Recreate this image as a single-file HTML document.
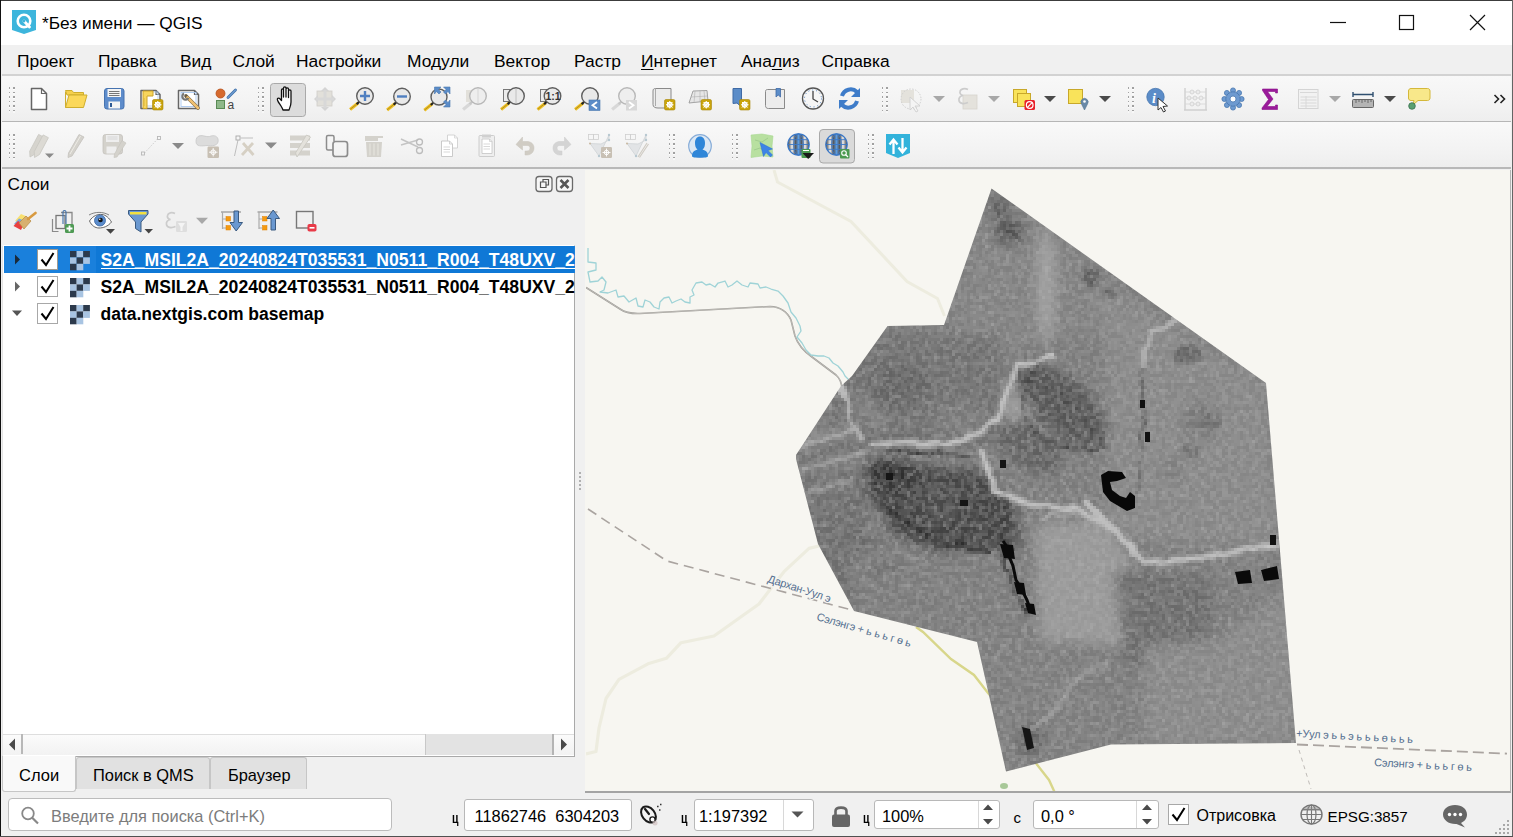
<!DOCTYPE html>
<html><head><meta charset="utf-8">
<style>
*{box-sizing:border-box}
html,body{margin:0;padding:0}
body{width:1513px;height:837px;overflow:hidden;position:relative;background:#4a4a4a;font-family:"Liberation Sans",sans-serif;color:#000}
.a{position:absolute}
.t{position:absolute;white-space:nowrap;line-height:1}
svg{position:absolute;left:0;top:0;overflow:visible}
</style></head><body>
<div class="a" style="left:0px;top:0px;width:1513px;height:1px;background:#3c3c3c"></div>
<div class="a" style="left:0px;top:0px;width:1px;height:837px;background:#111"></div>
<div class="a" style="left:1512px;top:0px;width:1px;height:837px;background:#646464"></div>
<div class="a" style="left:0px;top:836px;width:1513px;height:1px;background:#505050"></div>
<div class="a" style="left:1px;top:1px;width:1511px;height:835px;background:#f0f0f0"></div>
<div class="a" style="left:1px;top:1px;width:1511px;height:44px;background:#fff"></div>
<div class="t" style="left:42px;top:15.36px;font-size:17.3px;">*Без имени — QGIS</div>
<div class="a" style="left:2px;top:45px;width:1509px;height:29px;background:#f0f0f0"></div>
<div class="a" style="left:2px;top:74px;width:1509px;height:2px;background:#d2d2d2"></div>
<div class="t" style="left:17px;top:53.27px;font-size:17.4px;text-underline-offset:2px">Проект</div>
<div class="t" style="left:98px;top:53.27px;font-size:17.4px;text-underline-offset:2px">Правка</div>
<div class="t" style="left:180px;top:53.27px;font-size:17.4px;text-underline-offset:2px">Вид</div>
<div class="t" style="left:232.5px;top:53.27px;font-size:17.4px;text-underline-offset:2px">Слой</div>
<div class="t" style="left:296px;top:53.27px;font-size:17.4px;text-underline-offset:2px">Настройки</div>
<div class="t" style="left:407px;top:53.27px;font-size:17.4px;text-underline-offset:2px">Модули</div>
<div class="t" style="left:494px;top:53.27px;font-size:17.4px;text-underline-offset:2px">Вектор</div>
<div class="t" style="left:574px;top:53.27px;font-size:17.4px;text-underline-offset:2px">Растр</div>
<div class="t" style="left:641px;top:53.27px;font-size:17.4px;text-underline-offset:2px"><u>И</u>нтернет</div>
<div class="t" style="left:741px;top:53.27px;font-size:17.4px;text-underline-offset:2px">Ана<u>л</u>из</div>
<div class="t" style="left:821.5px;top:53.27px;font-size:17.4px;text-underline-offset:2px">Справка</div>
<div class="a" style="left:2px;top:76px;width:1509px;height:45px;background:linear-gradient(#f8f8f8,#f3f3f3 60%,#eeeeee)"></div>
<div class="a" style="left:2px;top:121px;width:1509px;height:1px;background:#b6b6b6"></div>
<div class="a" style="left:2px;top:122px;width:1509px;height:45px;background:linear-gradient(#f9f9f9,#f3f3f3 60%,#eeeeee)"></div>
<div class="a" style="left:2px;top:167px;width:1509px;height:2px;background:#b8b8b8"></div>
<div class="t" style="left:7.5px;top:176.44px;font-size:17.2px;">Слои</div>
<div class="a" style="left:2px;top:245px;width:573px;height:512px;background:#fff;border-left:1px solid #e4e4e4;border-top:1px solid #fff;border-right:1px solid #a9a9a9;border-bottom:1px solid #a9a9a9"></div>
<div class="a" style="left:4px;top:246px;width:571px;height:27px;background:#1a80dc"></div>
<div class="a" style="left:96px;top:246px;width:478px;height:27px;background:#0f78d6"></div>
<div class="t" style="left:100.5px;top:252.10px;font-size:17.6px;color:#fff;text-decoration:underline;text-underline-offset:2px;font-weight:bold;width:474px;overflow:hidden">S2A_MSIL2A_20240824T035531_N0511_R004_T48UXV_2024</div>
<div class="t" style="left:100.5px;top:279.10px;font-size:17.6px;font-weight:bold;width:474px;overflow:hidden">S2A_MSIL2A_20240824T035531_N0511_R004_T48UXV_2024</div>
<div class="t" style="left:100.5px;top:306.19px;font-size:17.5px;font-weight:bold;">data.nextgis.com basemap</div>
<div class="a" style="left:3px;top:734px;width:571px;height:21px;background:linear-gradient(#fbfbfb,#f2f2f2);border-top:1px solid #dedede"></div>
<div class="a" style="left:21px;top:734px;width:1.5px;height:20px;background:#b8b8b8"></div>
<div class="a" style="left:425px;top:734px;width:129px;height:21px;background:#e3e3e3;border-left:1px solid #c8c8c8;border-right:2px solid #b4b4b4"></div>
<div class="a" style="left:76px;top:757px;width:134px;height:32px;background:#e1e1e1;border:1px solid #c6c6c6;border-bottom:none;border-radius:3px 3px 0 0"></div>
<div class="a" style="left:210px;top:757px;width:97px;height:32px;background:#e1e1e1;border:1px solid #c6c6c6;border-bottom:none;border-radius:3px 3px 0 0"></div>
<div class="a" style="left:2px;top:756px;width:74px;height:36px;background:#f9f9f9;border:1px solid #c6c6c6;border-top:none;border-radius:0 0 3px 3px"></div>
<div class="t" style="left:19px;top:766.53px;font-size:16.5px;">Слои</div>
<div class="t" style="left:93px;top:766.62px;font-size:16.4px;">Поиск в QMS</div>
<div class="t" style="left:228px;top:766.62px;font-size:16.4px;">Браузер</div>
<div class="a" style="left:585px;top:170px;width:926px;height:623px;background:#f7f6f1;border-right:1px solid #b4b4b4;border-bottom:2px solid #a4a4a4"></div>
<svg width="1513" height="837"><defs><clipPath id="mapclip"><rect x="586" y="170" width="924" height="621"/></clipPath><clipPath id="satclip"><polygon points="991.5,188.5 1266,383 1296,743 1111,744.5 1006,771.5 977,642 854,611 818,544 796,459 796,455 841,386 852,376 887.5,326 944,325"/></clipPath><filter id="blur6" x="-50%" y="-50%" width="200%" height="200%"><feGaussianBlur stdDeviation="6"/></filter><filter id="blur3" x="-50%" y="-50%" width="200%" height="200%"><feGaussianBlur stdDeviation="3"/></filter><filter id="blur12" x="-50%" y="-50%" width="200%" height="200%"><feGaussianBlur stdDeviation="12"/></filter><filter id="noise" x="0" y="0" width="100%" height="100%"><feTurbulence type="fractalNoise" baseFrequency="0.18" numOctaves="2" seed="7"/><feColorMatrix type="matrix" values="0 0 0 0 0.45  0 0 0 0 0.45  0 0 0 0 0.45  2.2 0 0 0 -0.8"/></filter><filter id="noise2" x="0" y="0" width="100%" height="100%"><feTurbulence type="fractalNoise" baseFrequency="0.03" numOctaves="3" seed="3"/><feColorMatrix type="matrix" values="0.33 0.33 0.33 0 0  0.33 0.33 0.33 0 0  0.33 0.33 0.33 0 0  0 0 0 0 1"/></filter><filter id="pix" filterUnits="userSpaceOnUse" x="790" y="185" width="510" height="590"><feFlood x="791" y="186" width="1" height="1" flood-color="#000"/><feComposite x="790" y="185" width="3" height="3"/><feTile result="a"/><feComposite in="SourceGraphic" in2="a" operator="in"/><feMorphology operator="dilate" radius="1"/></filter><filter id="blur1" x="-50%" y="-50%" width="200%" height="200%"><feGaussianBlur stdDeviation="1.2"/></filter><filter id="disp" x="-10%" y="-10%" width="120%" height="120%"><feTurbulence type="fractalNoise" baseFrequency="0.07" numOctaves="2" seed="11" result="t"/><feDisplacementMap in="SourceGraphic" in2="t" scale="9" xChannelSelector="R" yChannelSelector="G" result="d"/><feGaussianBlur in="d" stdDeviation="1.3"/></filter></defs><g clip-path="url(#mapclip)"><path d="M774 170 L777.5 182 L851 221.5 L907 281.5 L937.5 298.5 L944.5 316" fill="none" stroke="#edecdf" stroke-width="3"/><path d="M586 754 L596 751.5 L599 728 L606 698.5 L619 679.3 L648 663.8 L666.4 658.3 L681 642.7 L714 636 L759 604 L771.4 587.8 L784 571.7 L809 548.4 L820 545.7" fill="none" stroke="#edecdf" stroke-width="3.2" stroke-linejoin="round"/><path d="M586 287.5 L620 309 Q627 314 640 313.5 L770 306.5 Q785 307 791 320 L795 336 Q799 348 812 357 L836 375 Q842 380 842 390" fill="none" stroke="#9a9894" stroke-width="1.6"/><path d="M586 287.5 L620 309 Q627 314 640 313.5 L770 306.5 Q785 307 791 320 L795 336 Q799 348 812 357 L836 375 Q842 380 842 390" fill="none" stroke="#dcdad4" stroke-width="0.5"/><polyline points="588,248 588,262 596,263 596,270 588,272 590,282 598,281 602,277 606,282 604,290 600,292 608,293 616,290 618,297 624,296 629,302 636,298 638,306 643,307 645,300 650,302 654,307 659,309 660,302 664,298 669,297 672,303 676,301 681,299 685,302 690,303 690,297 694,295 692,290 696,283 702,282 706,285 710,284 715,287 718,283 725,281 728,287 732,285 737,281 742,285 748,287 750,283 758,284 760,288 766,287 771,289 778,291 783,296 788,303 791,312 796,318 800,326 801,331 797,337 802,343 806,350 811,355 818,356 824,356 829,358 833,363 838,366 843,372 845,376 849,380 851,386" fill="none" stroke="#9fd3d7" stroke-width="1.3" stroke-linejoin="round"/><path d="M588 509 L667 561 L850 609.5" fill="none" stroke="#aaa4a0" stroke-width="1.6" stroke-dasharray="10 6"/><path d="M1297 744.5 L1507 753.6" fill="none" stroke="#aaa4a0" stroke-width="1.8" stroke-dasharray="11 5"/><path d="M1299 750 L1311 789" fill="none" stroke="#c0bcb8" stroke-width="1" stroke-dasharray="4 4"/><path d="M916 627 L923 632 L951 659 L974 675 L988 693 L1003 710" fill="none" stroke="#d8d68a" stroke-width="2.4"/><path d="M1035 762 L1049 780 L1055 793" fill="none" stroke="#d8d68a" stroke-width="2.4"/><ellipse cx="1004" cy="786" rx="4" ry="3" fill="#a8c898"/><text transform="translate(767,582) rotate(18)" font-family="Liberation Sans" font-size="11" letter-spacing="-0.2" fill="#557090" stroke="#f7f6f1" stroke-width="2.5" paint-order="stroke">Дархан-Уул э</text><text transform="translate(816,620) rotate(16)" font-family="Liberation Sans" font-size="11" letter-spacing="-0.2" fill="#557090" stroke="#f7f6f1" stroke-width="2.5" paint-order="stroke">Сэлэнгэ + ь ь  ь г ө ь</text><text transform="translate(1296,737) rotate(3)" font-family="Liberation Sans" font-size="11" letter-spacing="-0.2" fill="#557090" stroke="#f7f6f1" stroke-width="2.5" paint-order="stroke">+Уул э ь ь  э ь ь   ь ө ь ь ь</text><text transform="translate(1374,766) rotate(3)" font-family="Liberation Sans" font-size="11" letter-spacing="-0.2" fill="#557090" stroke="#f7f6f1" stroke-width="2.5" paint-order="stroke">Сэлэнгэ + ь ь  ь г ө ь</text><g clip-path="url(#satclip)"><g filter="url(#pix)"><rect x="790" y="185" width="510" height="590" fill="#7a7a7a"/><g filter="url(#blur6)"><path d="M945 320 L991 190 L1110 270 L1105 330 L1000 350 Z" fill="#808080"/><ellipse cx="1000" cy="208" rx="10" ry="11" fill="#4a4a4a"/><ellipse cx="1010" cy="232" rx="15" ry="13" fill="#4e4e4e"/><ellipse cx="1046" cy="285" rx="8" ry="58" fill="#a2a2a2"/><ellipse cx="1025" cy="395" rx="16" ry="38" transform="rotate(25 1025 395)" fill="#9a9a9a"/><ellipse cx="1090" cy="280" rx="10" ry="8" fill="#666"/><ellipse cx="1150" cy="325" rx="16" ry="10" fill="#686868"/><path d="M1100 280 L1266 383 L1280 545 L1106 540 L1106 380 Z" fill="#868686"/><ellipse cx="1200" cy="420" rx="18" ry="20" fill="#777"/><ellipse cx="1170" cy="470" rx="14" ry="10" fill="#7a7a7a"/><path d="M852 330 L1000 335 L1002 447 L870 452 L820 440 Z" fill="#6e6e6e"/><ellipse cx="900" cy="385" rx="30" ry="24" fill="#636363"/><path d="M858 400 L885 427" stroke="#8a8a8a" stroke-width="8"/><ellipse cx="960" cy="420" rx="30" ry="16" fill="#787878"/><path d="M796 440 L870 430 L868 560 L852 612 L820 580 Z" fill="#6c6c6c"/><path d="M800 446 L830 436 L862 428" stroke="#a2a2a2" stroke-width="5" fill="none"/><path d="M804 468 L835 462 L866 456" stroke="#949494" stroke-width="5" fill="none"/><path d="M808 492 L850 484" stroke="#8a8a8a" stroke-width="4"/><path d="M850 545 C860 538 872 550 887 545" stroke="#444" stroke-width="3" fill="none"/><ellipse cx="1062" cy="405" rx="58" ry="27" transform="rotate(42 1062 405)" fill="#555555"/><ellipse cx="1030" cy="447" rx="36" ry="21" transform="rotate(35 1030 447)" fill="#5e5e5e"/><path d="M868 462 L980 470 L1015 505 L1022 548 L940 553 L895 535 L866 490 Z" fill="#424242"/><path d="M868 460 L912 460 L910 488 L870 488 Z" fill="#2e2e2e"/><ellipse cx="945" cy="500" rx="30" ry="16" fill="#4a4a4a"/><path d="M1034 525 L1100 520 L1130 560 L1125 646 L1040 640 Z" fill="#989898"/><path d="M852 553 L1000 555 L1005 640 L977 642 L853 609 Z" fill="#7a7a7a"/><path d="M872 573 L900 565" stroke="#505050" stroke-width="4"/><path d="M1114 570 L1211 575 L1215 662 L1125 670 Z" fill="#6a6a6a"/><path d="M1144 646 L1215 640 L1290 590 L1296 742 L1144 744 Z" fill="#878787"/><path d="M977 640 L1040 640 L1110 700 L1107 745 L1004 772 Z" fill="#7c7c7c"/><ellipse cx="1030" cy="740" rx="14" ry="16" fill="#5e5e5e"/></g><g filter="url(#disp)"><path d="M1055 356 L1019 365 L1007 388 L998 420 L969 436 L947 445 L908 442 L870 445" fill="none" stroke="#a8a8a8" stroke-width="6" stroke-linejoin="round"/><path d="M1055 356 L1019 365 L1007 388 L998 420 L969 436 L947 445 L908 442 L870 445" fill="none" stroke="#c8c8c8" stroke-width="2.5" stroke-linejoin="round"/><path d="M981 450 L995 490 L1031 505 L1074 508 L1103 523 L1131 544 L1142 562 L1192 559 L1242 551 L1278 544" fill="none" stroke="#a6a6a6" stroke-width="7" stroke-linejoin="round"/><path d="M981 450 L995 490 L1031 505 L1074 508 L1103 523 L1131 544 L1142 562 L1192 559 L1242 551 L1278 544" fill="none" stroke="#cccccc" stroke-width="2.5" stroke-linejoin="round"/><path d="M886 451 L969 456" stroke="#2e2e2e" stroke-width="2.5"/><path d="M1038 361 C1025 375 1020 400 1025 420 C1035 440 1065 452 1100 450" fill="none" stroke="#3a3a3a" stroke-width="2"/><path d="M1021 382 C1045 378 1085 410 1104 448" fill="none" stroke="#454545" stroke-width="2"/><path d="M880 500 C900 520 930 545 990 550" fill="none" stroke="#2a2a2a" stroke-width="4"/><path d="M1005 500 L1000 540 L1010 580 L1030 615" fill="none" stroke="#3a3a3a" stroke-width="4"/><path d="M840 383 L851 413" stroke="#bdbdbd" stroke-width="6"/><path d="M1040 520 C1060 510 1090 515 1110 530" fill="none" stroke="#b0b0b0" stroke-width="3"/><path d="M1108 661 C1090 668 1075 680 1065 695 C1055 710 1045 720 1030 728" fill="none" stroke="#999" stroke-width="4"/><path d="M1141 367 L1152 332 L1177 321" fill="none" stroke="#b4b4b4" stroke-width="5"/><path d="M1142 367 L1143 420 L1140 460 L1136 500" fill="none" stroke="#505050" stroke-width="1.5"/><ellipse cx="1188" cy="355" rx="14" ry="10" fill="#666"/><ellipse cx="1210" cy="421" rx="11" ry="9" fill="#6e6e6e"/><ellipse cx="1190" cy="450" rx="9" ry="7" fill="#707070"/><ellipse cx="1091" cy="276" rx="7" ry="9" fill="#5a5a5a"/><ellipse cx="1108" cy="294" rx="7" ry="5" fill="#606060"/><path d="M1085 500 C1100 520 1120 530 1134 555" fill="none" stroke="#c0c0c0" stroke-width="7"/><path d="M800 450 L815 440 L835 436 L858 428" fill="none" stroke="#a8a8a8" stroke-width="4"/><path d="M802 468 L825 462 L848 458 L866 452" fill="none" stroke="#9c9c9c" stroke-width="3.5"/><path d="M808 490 L830 487 L852 480" fill="none" stroke="#969696" stroke-width="3"/><path d="M845 395 L852 420 L860 440" fill="none" stroke="#b0b0b0" stroke-width="4"/></g><rect x="790" y="185" width="510" height="590" filter="url(#noise)" opacity="0.55"/></g><path d="M1101 475 L1108 471 L1122 472 L1126 478 L1117 481 L1110 482 L1112 490 L1120 496 L1126 498 L1130 492 L1135 496 L1135 508 L1127 511 L1110 501 L1103 492 Z" fill="#080808"/><path d="M1003 541 L1008 548 L1009 556 L1013 566 L1016 580 L1021 588 L1027 600 L1031 612" fill="none" stroke="#0a0a0a" stroke-width="3"/><path d="M1000 544 L1013 545 L1015 559 L1004 558 Z M1014 582 L1024 583 L1026 595 L1017 594 Z M1025 603 L1034 604 L1036 615 L1028 613 Z" fill="#0a0a0a"/><path d="M1235 572 L1250 570 L1252 583 L1238 584 Z" fill="#0a0a0a"/><path d="M1261 570 L1277 566 L1279 579 L1264 581 Z" fill="#0a0a0a"/><path d="M1022 727 L1030 729 L1034 748 L1027 750 Z" fill="#151515"/><path d="M1140 400 L1145 400 L1145 408 L1140 408 Z M1145 432 L1150 432 L1150 442 L1145 442 Z M1270 535 L1276 535 L1276 545 L1270 545 Z" fill="#111"/><path d="M886 473 L893 473 L893 480 L886 480 Z M1000 460 L1006 460 L1006 468 L1000 468 Z M960 500 L968 500 L968 506 L960 506 Z" fill="#151515"/></g></g></svg>
<div class="a" style="left:8px;top:798px;width:384px;height:33px;background:#fff;border:1px solid #bcbcbc;border-radius:4px"></div>
<div class="t" style="left:51px;top:808.12px;font-size:16.4px;color:#7c7c7c">Введите для поиска (Ctrl+K)</div>
<div class="t" style="left:452px;top:810.30px;font-size:15px;font-weight:bold;transform:scaleX(0.7);transform-origin:left">ц</div>
<div class="a" style="left:464px;top:799px;width:168px;height:32px;background:#fff;border:1px solid #b8b8b8;border-radius:3px"></div>
<div class="t" style="left:474.5px;top:808.12px;font-size:16.4px;">11862746&nbsp; 6304203</div>
<div class="t" style="left:681px;top:810.30px;font-size:15px;font-weight:bold;transform:scaleX(0.7);transform-origin:left">ц</div>
<div class="a" style="left:694px;top:799px;width:120px;height:32px;background:#fff;border:1px solid #b8b8b8;border-radius:3px"></div>
<div class="a" style="left:783px;top:800px;width:1px;height:30px;background:#d8d8d8"></div>
<div class="t" style="left:699px;top:808.12px;font-size:16.4px;">1:197392</div>
<div class="t" style="left:863px;top:810.30px;font-size:15px;font-weight:bold;transform:scaleX(0.7);transform-origin:left">ц</div>
<div class="a" style="left:874px;top:800px;width:126px;height:29px;background:#fff;border:1px solid #b8b8b8;border-radius:3px"></div>
<div class="a" style="left:978px;top:801px;width:1px;height:27px;background:#d8d8d8"></div>
<div class="t" style="left:882px;top:808.12px;font-size:16.4px;">100%</div>
<div class="t" style="left:1013.5px;top:810.30px;font-size:15px;">c</div>
<div class="a" style="left:1033px;top:800px;width:126px;height:29px;background:#fff;border:1px solid #b8b8b8;border-radius:3px"></div>
<div class="a" style="left:1136px;top:801px;width:1px;height:27px;background:#d8d8d8"></div>
<div class="t" style="left:1041px;top:808.12px;font-size:16.4px;">0,0 °</div>
<div class="t" style="left:1196.5px;top:807.96px;font-size:16px;">Отрисовка</div>
<div class="t" style="left:1327.5px;top:808.63px;font-size:15.2px;">EPSG:3857</div>
<svg width="1513" height="837"><path d="M12 10 H36 V30 L24 34 L12 30 Z" fill="#3db5dc"/><circle cx="24" cy="21" r="6.3" fill="none" stroke="#fff" stroke-width="2.6"/><path d="M24 21 L29.5 27" stroke="#fff" stroke-width="2.8" stroke-linecap="round"/><circle cx="24" cy="21" r="1.4" fill="#3db5dc"/><path d="M1330 22.5 H1346" stroke="#111" stroke-width="1.2"/><rect x="1399.5" y="15.5" width="14" height="14" fill="none" stroke="#111" stroke-width="1.2"/><path d="M1470 15 L1485 30 M1485 15 L1470 30" stroke="#111" stroke-width="1.2"/><rect x="9" y="87.0" width="1" height="2" fill="#a4a4a4"/><rect x="13" y="87.0" width="2" height="2" fill="#a0a0a0"/><rect x="9" y="89.0" width="1" height="1" fill="#ffffff"/><rect x="13" y="89.0" width="2" height="1" fill="#ffffff"/><rect x="9" y="92.0" width="1" height="1" fill="#a4a4a4"/><rect x="13" y="92.0" width="2" height="1" fill="#a0a0a0"/><rect x="9" y="93.5" width="1" height="1" fill="#ffffff"/><rect x="13" y="93.5" width="2" height="1" fill="#ffffff"/><rect x="9" y="96.0" width="1" height="2" fill="#a4a4a4"/><rect x="13" y="96.0" width="2" height="2" fill="#a0a0a0"/><rect x="9" y="98.0" width="1" height="1" fill="#ffffff"/><rect x="13" y="98.0" width="2" height="1" fill="#ffffff"/><rect x="9" y="101.0" width="1" height="1" fill="#a4a4a4"/><rect x="13" y="101.0" width="2" height="1" fill="#a0a0a0"/><rect x="9" y="102.5" width="1" height="1" fill="#ffffff"/><rect x="13" y="102.5" width="2" height="1" fill="#ffffff"/><rect x="9" y="105.0" width="1" height="2" fill="#a4a4a4"/><rect x="13" y="105.0" width="2" height="2" fill="#a0a0a0"/><rect x="9" y="107.0" width="1" height="1" fill="#ffffff"/><rect x="13" y="107.0" width="2" height="1" fill="#ffffff"/><rect x="9" y="110.0" width="1" height="1" fill="#a4a4a4"/><rect x="13" y="110.0" width="2" height="1" fill="#a0a0a0"/><rect x="9" y="111.5" width="1" height="1" fill="#ffffff"/><rect x="13" y="111.5" width="2" height="1" fill="#ffffff"/><rect x="258" y="87.0" width="1" height="2" fill="#a4a4a4"/><rect x="262" y="87.0" width="2" height="2" fill="#a0a0a0"/><rect x="258" y="89.0" width="1" height="1" fill="#ffffff"/><rect x="262" y="89.0" width="2" height="1" fill="#ffffff"/><rect x="258" y="92.0" width="1" height="1" fill="#a4a4a4"/><rect x="262" y="92.0" width="2" height="1" fill="#a0a0a0"/><rect x="258" y="93.5" width="1" height="1" fill="#ffffff"/><rect x="262" y="93.5" width="2" height="1" fill="#ffffff"/><rect x="258" y="96.0" width="1" height="2" fill="#a4a4a4"/><rect x="262" y="96.0" width="2" height="2" fill="#a0a0a0"/><rect x="258" y="98.0" width="1" height="1" fill="#ffffff"/><rect x="262" y="98.0" width="2" height="1" fill="#ffffff"/><rect x="258" y="101.0" width="1" height="1" fill="#a4a4a4"/><rect x="262" y="101.0" width="2" height="1" fill="#a0a0a0"/><rect x="258" y="102.5" width="1" height="1" fill="#ffffff"/><rect x="262" y="102.5" width="2" height="1" fill="#ffffff"/><rect x="258" y="105.0" width="1" height="2" fill="#a4a4a4"/><rect x="262" y="105.0" width="2" height="2" fill="#a0a0a0"/><rect x="258" y="107.0" width="1" height="1" fill="#ffffff"/><rect x="262" y="107.0" width="2" height="1" fill="#ffffff"/><rect x="258" y="110.0" width="1" height="1" fill="#a4a4a4"/><rect x="262" y="110.0" width="2" height="1" fill="#a0a0a0"/><rect x="258" y="111.5" width="1" height="1" fill="#ffffff"/><rect x="262" y="111.5" width="2" height="1" fill="#ffffff"/><rect x="882" y="87.0" width="1" height="2" fill="#a4a4a4"/><rect x="886" y="87.0" width="2" height="2" fill="#a0a0a0"/><rect x="882" y="89.0" width="1" height="1" fill="#ffffff"/><rect x="886" y="89.0" width="2" height="1" fill="#ffffff"/><rect x="882" y="92.0" width="1" height="1" fill="#a4a4a4"/><rect x="886" y="92.0" width="2" height="1" fill="#a0a0a0"/><rect x="882" y="93.5" width="1" height="1" fill="#ffffff"/><rect x="886" y="93.5" width="2" height="1" fill="#ffffff"/><rect x="882" y="96.0" width="1" height="2" fill="#a4a4a4"/><rect x="886" y="96.0" width="2" height="2" fill="#a0a0a0"/><rect x="882" y="98.0" width="1" height="1" fill="#ffffff"/><rect x="886" y="98.0" width="2" height="1" fill="#ffffff"/><rect x="882" y="101.0" width="1" height="1" fill="#a4a4a4"/><rect x="886" y="101.0" width="2" height="1" fill="#a0a0a0"/><rect x="882" y="102.5" width="1" height="1" fill="#ffffff"/><rect x="886" y="102.5" width="2" height="1" fill="#ffffff"/><rect x="882" y="105.0" width="1" height="2" fill="#a4a4a4"/><rect x="886" y="105.0" width="2" height="2" fill="#a0a0a0"/><rect x="882" y="107.0" width="1" height="1" fill="#ffffff"/><rect x="886" y="107.0" width="2" height="1" fill="#ffffff"/><rect x="882" y="110.0" width="1" height="1" fill="#a4a4a4"/><rect x="886" y="110.0" width="2" height="1" fill="#a0a0a0"/><rect x="882" y="111.5" width="1" height="1" fill="#ffffff"/><rect x="886" y="111.5" width="2" height="1" fill="#ffffff"/><rect x="1128" y="87.0" width="1" height="2" fill="#a4a4a4"/><rect x="1132" y="87.0" width="2" height="2" fill="#a0a0a0"/><rect x="1128" y="89.0" width="1" height="1" fill="#ffffff"/><rect x="1132" y="89.0" width="2" height="1" fill="#ffffff"/><rect x="1128" y="92.0" width="1" height="1" fill="#a4a4a4"/><rect x="1132" y="92.0" width="2" height="1" fill="#a0a0a0"/><rect x="1128" y="93.5" width="1" height="1" fill="#ffffff"/><rect x="1132" y="93.5" width="2" height="1" fill="#ffffff"/><rect x="1128" y="96.0" width="1" height="2" fill="#a4a4a4"/><rect x="1132" y="96.0" width="2" height="2" fill="#a0a0a0"/><rect x="1128" y="98.0" width="1" height="1" fill="#ffffff"/><rect x="1132" y="98.0" width="2" height="1" fill="#ffffff"/><rect x="1128" y="101.0" width="1" height="1" fill="#a4a4a4"/><rect x="1132" y="101.0" width="2" height="1" fill="#a0a0a0"/><rect x="1128" y="102.5" width="1" height="1" fill="#ffffff"/><rect x="1132" y="102.5" width="2" height="1" fill="#ffffff"/><rect x="1128" y="105.0" width="1" height="2" fill="#a4a4a4"/><rect x="1132" y="105.0" width="2" height="2" fill="#a0a0a0"/><rect x="1128" y="107.0" width="1" height="1" fill="#ffffff"/><rect x="1132" y="107.0" width="2" height="1" fill="#ffffff"/><rect x="1128" y="110.0" width="1" height="1" fill="#a4a4a4"/><rect x="1132" y="110.0" width="2" height="1" fill="#a0a0a0"/><rect x="1128" y="111.5" width="1" height="1" fill="#ffffff"/><rect x="1132" y="111.5" width="2" height="1" fill="#ffffff"/><path d="M31.5 88.5 H41.5 L46.5 93.5 V109.5 H31.5 Z" fill="#fff" stroke="#666" stroke-width="1.5" stroke-linejoin="round"/><path d="M41.5 88.5 V93.5 H46.5" fill="none" stroke="#666" stroke-width="1.2000000000000002"/><path d="M65.5 90.5 H72 L73.5 92.5 H83.5 V95 H67 Z" fill="#f6d04d" stroke="#cfae2e" stroke-width="1"/><path d="M65.5 92 V107.5 H83.5 L87 95 H69 L65.5 107.5" fill="#fbd85a" stroke="#cfae2e" stroke-width="1" stroke-linejoin="round"/><rect x="104.5" y="88.5" width="19.5" height="20.5" rx="2.5" fill="#5d8ccb" stroke="#4673b0" stroke-width="1"/><rect x="107.5" y="89" width="13.5" height="8" fill="#f4f4f4"/><path d="M109 91.5H119.5M109 93.5H119.5M109 95.5H119.5" stroke="#555" stroke-width="0.8"/><rect x="108.5" y="101.5" width="11.5" height="7" fill="#f4f4f4"/><rect x="110" y="103" width="2" height="4" fill="#2d5a95"/><path d="M141 90.5 H156 L160 94.5 V108.5 H141 Z" fill="#fff" stroke="#666" stroke-width="1.5" stroke-linejoin="round"/><path d="M156 90.5 V94.5 H160" fill="none" stroke="#666" stroke-width="1.2000000000000002"/><rect x="144" y="92" width="14" height="14" fill="none" stroke="#a9c8f0" stroke-width="0.8"/><path d="M143 91 H153 V96 H147 V108.5 H143 Z" fill="#f7d55c" stroke="#cda42a" stroke-width="1"/><path d="M143.5 99H145M143.5 101H145M143.5 103H145M143.5 105H145" stroke="#cda42a" stroke-width="0.6"/><rect x="152.5" y="99.5" width="10.5" height="10.5" rx="1.5" fill="#c9a40c" stroke="#a8870a" stroke-width="0.6"/><circle cx="157.75" cy="104.75" r="2.31" fill="none" stroke="#fff" stroke-width="1.2"/><path d="M157.75 101.0V108.5M154.0 104.75H161.5M155.0 102.0L160.5 107.5M160.5 102.0L155.0 107.5" stroke="#fff" stroke-width="1"/><path d="M178.5 90.5 H194.5 L198.5 94.5 V108.5 H178.5 Z" fill="#fff" stroke="#666" stroke-width="1.5" stroke-linejoin="round"/><path d="M194.5 90.5 V94.5 H198.5" fill="none" stroke="#666" stroke-width="1.2000000000000002"/><rect x="181" y="92.5" width="15" height="14" fill="none" stroke="#a9c8f0" stroke-width="0.9"/><path d="M186 96 L198 108" stroke="#6a5a40" stroke-width="3.6" stroke-linecap="round"/><path d="M187.5 97.5 L198 108" stroke="#f0c070" stroke-width="2.6" stroke-linecap="round"/><path d="M184 93.5 a3.3 3.3 0 1 0 4.5 4.5" fill="none" stroke="#777" stroke-width="2.2"/><circle cx="220.5" cy="93.5" r="4.5" fill="#d66a2e" stroke="#b5501c" stroke-width="0.8"/><path d="M228 97.5 L235.5 90" stroke="#3f6fa8" stroke-width="2.8" stroke-linecap="round"/><path d="M228 97.5 L235.5 90" stroke="#6b9bd0" stroke-width="1.4" stroke-linecap="round"/><rect x="216.5" y="100.5" width="8" height="8" fill="#8fb88a" stroke="#5a8a55" stroke-width="1"/><text x="227.5" y="108.5" font-family="Liberation Sans" font-size="12" fill="#444">a</text><rect x="270.5" y="83.5" width="35" height="33" rx="3" fill="#dcdcdc" stroke="#a9a9a9" stroke-width="1"/><path d="M281 106 C279 103 276.5 100 277.5 98.5 C278.5 97.5 280 98.5 281.5 100.5 V90 C281.5 88.5 283.5 88.5 283.5 90 V97 V88 C283.5 86.5 286 86.5 286 88 V97 V89 C286 87.5 288.5 87.5 288.5 89 V97.5 V91 C288.5 89.5 291 89.5 291 91 V102 C291 106 289.5 108 289 110 H283 C282.5 108.5 282 107.5 281 106 Z" fill="#fff" stroke="#111" stroke-width="1.3" stroke-linejoin="round"/><rect x="317" y="91" width="15" height="15" fill="#e2e0da" stroke="#d0cec8" stroke-width="0.8"/><path d="M325 87 L329 91 H321 Z M325 111 L329 107 H321 Z M314 99 L318 95 V103 Z M336 99 L332 95 V103 Z" fill="#d4d4d4"/><path d="M325 90 V108 M316 99 H334" stroke="#d8d8d8" stroke-width="3"/><path d="M358.1 102.9 L350.1 109.4" stroke="#f0c020" stroke-width="3.2" stroke-linecap="butt"/><path d="M359.6 101.4 L356.6 104.2" stroke="#222" stroke-width="2.2"/><path d="M356.6 104.2 L350.1 109.4" stroke="#333" stroke-width="0.6" fill="none" opacity="0.6"/><circle cx="365" cy="96" r="8.3" fill="#e9e9e9" stroke="#5e5e5e" stroke-width="1.4"/><path d="M365 91 V101 M360 96 H370" stroke="#4f7fc0" stroke-width="2.4"/><path d="M395.1 103.4 L387.1 109.9" stroke="#f0c020" stroke-width="3.2" stroke-linecap="butt"/><path d="M396.6 101.9 L393.6 104.7" stroke="#222" stroke-width="2.2"/><path d="M393.6 104.7 L387.1 109.9" stroke="#333" stroke-width="0.6" fill="none" opacity="0.6"/><circle cx="402" cy="96.5" r="8.3" fill="#e9e9e9" stroke="#5e5e5e" stroke-width="1.4"/><path d="M397 96.5 H407" stroke="#4f7fc0" stroke-width="2.4"/><path d="M432.3 103.7 L424.3 110.2" stroke="#f0c020" stroke-width="3.2" stroke-linecap="butt"/><path d="M433.8 102.2 L430.8 105.0" stroke="#222" stroke-width="2.2"/><path d="M430.8 105.0 L424.3 110.2" stroke="#333" stroke-width="0.6" fill="none" opacity="0.6"/><circle cx="439" cy="97" r="8" fill="#e9e9e9" stroke="#5e5e5e" stroke-width="1.4"/><path d="M434 87 H444 V89 M434 87 V92" fill="none"/><path d="M434.5 87 H441 L438.5 89.5 L441 92 L439 94 L436.5 91.5 L434.5 94 Z" fill="#5b8cc8" stroke="#4a78b0" stroke-width="0.6"/><path d="M450 87 H443.5 L446 89.5 L443.5 92 L445.5 94 L448 91.5 L450 94 Z" fill="#5b8cc8" stroke="#4a78b0" stroke-width="0.6"/><path d="M450 107 H443.5 L446 104.5 L443.5 102 L445.5 100 L448 102.5 L450 100 Z" fill="#5b8cc8" stroke="#4a78b0" stroke-width="0.6"/><rect x="466" y="90" width="8" height="12" fill="#e2e0da"/><path d="M471.1 102.9 L463.1 109.4" stroke="#d8d8d8" stroke-width="3.2" stroke-linecap="butt"/><path d="M472.6 101.4 L469.6 104.2" stroke="#c8c8c8" stroke-width="2.2"/><circle cx="478" cy="96" r="8.3" fill="#eeeeee" stroke="#b8b8b8" stroke-width="1.4"/><path d="M478 88 V104" stroke="#cfcfcf" stroke-width="0.8"/><rect x="503.5" y="89.5" width="10" height="12" fill="#ececec" stroke="#777" stroke-width="1"/><path d="M509.1 102.9 L501.1 109.4" stroke="#f0c020" stroke-width="3.2" stroke-linecap="butt"/><path d="M510.6 101.4 L507.6 104.2" stroke="#222" stroke-width="2.2"/><path d="M507.6 104.2 L501.1 109.4" stroke="#333" stroke-width="0.6" fill="none" opacity="0.6"/><circle cx="516" cy="96" r="8.3" fill="#e9e9e9" stroke="#5e5e5e" stroke-width="1.4"/><path d="M516 88.5 V103.5" stroke="#bbb" stroke-width="0.9"/><rect x="540.5" y="89.5" width="10" height="12" fill="#ececec" stroke="#777" stroke-width="1"/><path d="M545.6 102.9 L537.6 109.4" stroke="#f0c020" stroke-width="3.2" stroke-linecap="butt"/><path d="M547.1 101.4 L544.1 104.2" stroke="#222" stroke-width="2.2"/><path d="M544.1 104.2 L537.6 109.4" stroke="#333" stroke-width="0.6" fill="none" opacity="0.6"/><circle cx="552.5" cy="96" r="8.3" fill="#e9e9e9" stroke="#5e5e5e" stroke-width="1.4"/><text x="545.5" y="100" font-family="Liberation Sans" font-weight="bold" font-size="10.5" fill="#333">1:1</text><path d="M583.1 102.9 L575.1 109.4" stroke="#f0c020" stroke-width="3.2" stroke-linecap="butt"/><path d="M584.6 101.4 L581.6 104.2" stroke="#222" stroke-width="2.2"/><path d="M581.6 104.2 L575.1 109.4" stroke="#333" stroke-width="0.6" fill="none" opacity="0.6"/><circle cx="590" cy="96" r="8.3" fill="#e9e9e9" stroke="#5e5e5e" stroke-width="1.4"/><rect x="589" y="100" width="11" height="10.5" fill="#5b8cc8" stroke="#4a78b0" stroke-width="0.6"/><path d="M597 102 L592.5 105.3 L597 108.5" fill="none" stroke="#fff" stroke-width="1.8"/><path d="M620.1 102.9 L612.1 109.4" stroke="#d8d8d8" stroke-width="3.2" stroke-linecap="butt"/><path d="M621.6 101.4 L618.6 104.2" stroke="#c8c8c8" stroke-width="2.2"/><circle cx="627" cy="96" r="8.3" fill="#eeeeee" stroke="#b8b8b8" stroke-width="1.4"/><rect x="626" y="100" width="11" height="10.5" fill="#d8d8d8"/><path d="M629 102 L633.5 105.3 L629 108.5" fill="none" stroke="#fff" stroke-width="1.8"/><path d="M655.5 88.5 H671 V108 H658 C655 108 653 107 653 104.5 V91 C653 89 654 88.5 655.5 88.5 Z" fill="#ececec" stroke="#8a8a8a" stroke-width="1"/><path d="M655.5 88.5 V106" stroke="#9a9a9a" stroke-width="0.8"/><rect x="664.5" y="99.5" width="10.5" height="10.5" rx="1.5" fill="#c9a40c" stroke="#a8870a" stroke-width="0.6"/><circle cx="669.75" cy="104.75" r="2.31" fill="none" stroke="#fff" stroke-width="1.2"/><path d="M669.75 101.0V108.5M666.0 104.75H673.5M667.0 102.0L672.5 107.5M672.5 102.0L667.0 107.5" stroke="#fff" stroke-width="1"/><path d="M689 103 L693 91 L707 90.5 L708 101 Z" fill="#e6e6e6" stroke="#9a9a9a" stroke-width="0.9"/><path d="M691 97 L707.5 96 M695 91 L694 103 M700 90.5 L700 102 M704 90.5 L705 101.5" stroke="#b0b0b0" stroke-width="0.6"/><rect x="701" y="99.5" width="10.5" height="10.5" rx="1.5" fill="#c9a40c" stroke="#a8870a" stroke-width="0.6"/><circle cx="706.25" cy="104.75" r="2.31" fill="none" stroke="#fff" stroke-width="1.2"/><path d="M706.25 101.0V108.5M702.5 104.75H710.0M703.5 102.0L709.0 107.5M709.0 102.0L703.5 107.5" stroke="#fff" stroke-width="1"/><path d="M733 88.5 H741.5 V107 L737 103 L733 103.5 Z" fill="#5b8cc8" stroke="#3f6aa5" stroke-width="1"/><rect x="739.5" y="99.5" width="10.5" height="10.5" rx="1.5" fill="#c9a40c" stroke="#a8870a" stroke-width="0.6"/><circle cx="744.75" cy="104.75" r="2.31" fill="none" stroke="#fff" stroke-width="1.2"/><path d="M744.75 101.0V108.5M741.0 104.75H748.5M742.0 102.0L747.5 107.5M747.5 102.0L742.0 107.5" stroke="#fff" stroke-width="1"/><path d="M767.5 89.5 H784.5 V108.5 H768.5 C766.5 108.5 765.5 107.5 765.5 105.5 V91.5 C765.5 90 766.5 89.5 767.5 89.5 Z" fill="#ececec" stroke="#8a8a8a" stroke-width="1"/><path d="M776 88.5 H780.5 V97 L778.2 95 L776 97 Z" fill="#5b8cc8" stroke="#3f6aa5" stroke-width="0.8"/><circle cx="813" cy="98.5" r="10.5" fill="#f6f6f6" stroke="#555" stroke-width="1.3"/><circle cx="813" cy="98.5" r="8.5" fill="none" stroke="#4a7fc0" stroke-width="1" stroke-dasharray="1 2.9"/><path d="M813 91 V99 L818 102" fill="none" stroke="#444" stroke-width="1.3"/><path d="M842 96 A9 9 0 0 1 857 92" fill="none" stroke="#3e7cc9" stroke-width="4"/><path d="M860 88 V97 H851 Z" fill="#3e7cc9"/><path d="M857 101 A9 9 0 0 1 842 105" fill="none" stroke="#3e7cc9" stroke-width="4"/><path d="M839 109 V100 H848 Z" fill="#3e7cc9"/><rect x="901" y="90" width="13" height="13" fill="#e4e2dc"/><circle cx="911" cy="99" r="10" fill="none" stroke="#cfcfcf" stroke-width="1" stroke-dasharray="1.5 1.5"/><path d="M910 97 L910 110 L913 107 L916 112 L918 111 L915 106 L920 106 Z" fill="#f4f4f4" stroke="#cfcfcf" stroke-width="0.9"/><path d="M933 96 h12 l-6.0 6.0 z" fill="#a8a8a8"/><rect x="963" y="95" width="14" height="14" fill="#e4e2dc" stroke="#d6d4ce" stroke-width="0.8"/><path d="M968 89.5 C965 88 960.5 88.5 960 91.5 C959.5 93.5 961 95 963 95.5 C960 96 958.5 98 959 100.5 C959.5 103.5 963.5 104.5 968 102.5" fill="none" stroke="#cccccc" stroke-width="1.7"/><path d="M988 96 h12 l-6.0 6.0 z" fill="#a8a8a8"/><rect x="1013.5" y="89.5" width="13" height="13" fill="#f9e35a" stroke="#c8a82a" stroke-width="1"/><rect x="1017.5" y="93.5" width="13" height="13" fill="#f9e35a" stroke="#c8a82a" stroke-width="1"/><rect x="1024.5" y="100" width="10.5" height="10" rx="1.5" fill="#e8202a"/><circle cx="1029.7" cy="105" r="3.3" fill="none" stroke="#fff" stroke-width="1.2"/><path d="M1027.5 107.3 L1032 102.7" stroke="#fff" stroke-width="1.2"/><path d="M1044 96 h12 l-6.0 6.0 z" fill="#4a4a4a"/><rect x="1068.5" y="89.5" width="14" height="14" fill="#f9e35a" stroke="#c8a82a" stroke-width="1"/><path d="M1084.5 110 L1081.5 104 A3.6 3.6 0 1 1 1087.5 104 Z" fill="#6a8aa8" stroke="#557590" stroke-width="0.6"/><circle cx="1084.5" cy="101.5" r="1.3" fill="#fff"/><path d="M1099 96 h12 l-6.0 6.0 z" fill="#4a4a4a"/><circle cx="1155.5" cy="97" r="8.7" fill="#5b8cc8" stroke="#4a78b0" stroke-width="0.8"/><text x="1152" y="102.5" font-family="Liberation Serif" font-style="italic" font-weight="bold" font-size="14" fill="#fff">i</text><path d="M1158 98 L1158 110 L1161 107.5 L1163.5 112 L1165.5 111 L1163 106.5 L1167.5 106 Z" fill="#fff" stroke="#333" stroke-width="1" stroke-linejoin="round"/><path d="M1185 88 V110 M1206 88 V110 M1184 110 H1207" stroke="#d0d0d0" stroke-width="1.4"/><path d="M1185 92 H1206 M1185 98 H1206 M1185 104 H1206" stroke="#d4d4d4" stroke-width="0.8"/><circle cx="1192" cy="92" r="2" fill="#ececec" stroke="#cfcfcf" stroke-width="0.8"/><circle cx="1198" cy="92" r="2" fill="#ececec" stroke="#cfcfcf" stroke-width="0.8"/><circle cx="1189" cy="98" r="2" fill="#ececec" stroke="#cfcfcf" stroke-width="0.8"/><circle cx="1195" cy="98" r="2" fill="#ececec" stroke="#cfcfcf" stroke-width="0.8"/><circle cx="1201" cy="98" r="2" fill="#ececec" stroke="#cfcfcf" stroke-width="0.8"/><circle cx="1192" cy="104" r="2" fill="#ececec" stroke="#cfcfcf" stroke-width="0.8"/><circle cx="1198" cy="104" r="2" fill="#ececec" stroke="#cfcfcf" stroke-width="0.8"/><circle cx="1241.60" cy="99.00" r="2.5" fill="#6e9ad0" stroke="#4a78b0" stroke-width="0.8"/><circle cx="1239.08" cy="105.08" r="2.5" fill="#6e9ad0" stroke="#4a78b0" stroke-width="0.8"/><circle cx="1233.00" cy="107.60" r="2.5" fill="#6e9ad0" stroke="#4a78b0" stroke-width="0.8"/><circle cx="1226.92" cy="105.08" r="2.5" fill="#6e9ad0" stroke="#4a78b0" stroke-width="0.8"/><circle cx="1224.40" cy="99.00" r="2.5" fill="#6e9ad0" stroke="#4a78b0" stroke-width="0.8"/><circle cx="1226.92" cy="92.92" r="2.5" fill="#6e9ad0" stroke="#4a78b0" stroke-width="0.8"/><circle cx="1233.00" cy="90.40" r="2.5" fill="#6e9ad0" stroke="#4a78b0" stroke-width="0.8"/><circle cx="1239.08" cy="92.92" r="2.5" fill="#6e9ad0" stroke="#4a78b0" stroke-width="0.8"/><circle cx="1233" cy="99" r="7.2" fill="#6e9ad0" stroke="#4a78b0" stroke-width="0.8"/><circle cx="1233" cy="99" r="3" fill="#fff" stroke="#4a78b0" stroke-width="0.8"/><path d="M1262.5 89 H1277.5 V93 H1275.5 V91.5 H1267.5 L1273 99 L1267 106.5 H1275.5 V105 H1277.5 V109.5 H1262 V108 L1268.5 99.5 L1262.5 90.5 Z" fill="#9a1a9a" stroke="#8a108a" stroke-width="0.6"/><rect x="1298.5" y="89.5" width="19.5" height="19" fill="#f2f2f2" stroke="#d4d4d4" stroke-width="1"/><path d="M1300 92.5 H1317 M1300.5 97 H1316.5 M1300.5 100 H1316.5 M1300.5 103 H1316.5 M1300.5 106 H1316.5 M1306 96 V108" stroke="#d8d8d8" stroke-width="1"/><path d="M1329 96 h12 l-6.0 6.0 z" fill="#a8a8a8"/><path d="M1353 94.5 H1373 M1353 92 V97 M1373 92 V97" stroke="#2f4f6f" stroke-width="1.4"/><rect x="1352.5" y="99.5" width="21" height="8" rx="1" fill="#b4b4b4" stroke="#666" stroke-width="1"/><path d="M1356 100 V103 M1359 100 V102 M1362 100 V103 M1365 100 V102 M1368 100 V103 M1371 100 V102" stroke="#555" stroke-width="0.8"/><path d="M1384 96 h12 l-6.0 6.0 z" fill="#4a4a4a"/><path d="M1411 88.5 H1427.5 C1429 88.5 1430 89.5 1430 91 V98 C1430 99.5 1429 100.5 1427.5 100.5 H1418 L1413 105 L1414 100.5 H1411 C1409.5 100.5 1408.5 99.5 1408.5 98 V91 C1408.5 89.5 1409.5 88.5 1411 88.5 Z" fill="#f8e88a" stroke="#d4b83a" stroke-width="1"/><circle cx="1412" cy="106" r="3.3" fill="#5aa070" stroke="#3a7050" stroke-width="0.8"/><path d="M1494.5 95 L1498.5 99 L1494.5 103 M1500.5 95 L1504.5 99 L1500.5 103" fill="none" stroke="#222" stroke-width="1.6"/><rect x="9" y="134.0" width="1" height="2" fill="#a4a4a4"/><rect x="13" y="134.0" width="2" height="2" fill="#a0a0a0"/><rect x="9" y="136.0" width="1" height="1" fill="#ffffff"/><rect x="13" y="136.0" width="2" height="1" fill="#ffffff"/><rect x="9" y="139.0" width="1" height="1" fill="#a4a4a4"/><rect x="13" y="139.0" width="2" height="1" fill="#a0a0a0"/><rect x="9" y="140.5" width="1" height="1" fill="#ffffff"/><rect x="13" y="140.5" width="2" height="1" fill="#ffffff"/><rect x="9" y="143.0" width="1" height="2" fill="#a4a4a4"/><rect x="13" y="143.0" width="2" height="2" fill="#a0a0a0"/><rect x="9" y="145.0" width="1" height="1" fill="#ffffff"/><rect x="13" y="145.0" width="2" height="1" fill="#ffffff"/><rect x="9" y="148.0" width="1" height="1" fill="#a4a4a4"/><rect x="13" y="148.0" width="2" height="1" fill="#a0a0a0"/><rect x="9" y="149.5" width="1" height="1" fill="#ffffff"/><rect x="13" y="149.5" width="2" height="1" fill="#ffffff"/><rect x="9" y="152.0" width="1" height="2" fill="#a4a4a4"/><rect x="13" y="152.0" width="2" height="2" fill="#a0a0a0"/><rect x="9" y="154.0" width="1" height="1" fill="#ffffff"/><rect x="13" y="154.0" width="2" height="1" fill="#ffffff"/><rect x="9" y="157.0" width="1" height="1" fill="#a4a4a4"/><rect x="13" y="157.0" width="2" height="1" fill="#a0a0a0"/><rect x="9" y="158.5" width="1" height="1" fill="#ffffff"/><rect x="13" y="158.5" width="2" height="1" fill="#ffffff"/><rect x="669" y="134.0" width="1" height="2" fill="#a4a4a4"/><rect x="673" y="134.0" width="2" height="2" fill="#a0a0a0"/><rect x="669" y="136.0" width="1" height="1" fill="#ffffff"/><rect x="673" y="136.0" width="2" height="1" fill="#ffffff"/><rect x="669" y="139.0" width="1" height="1" fill="#a4a4a4"/><rect x="673" y="139.0" width="2" height="1" fill="#a0a0a0"/><rect x="669" y="140.5" width="1" height="1" fill="#ffffff"/><rect x="673" y="140.5" width="2" height="1" fill="#ffffff"/><rect x="669" y="143.0" width="1" height="2" fill="#a4a4a4"/><rect x="673" y="143.0" width="2" height="2" fill="#a0a0a0"/><rect x="669" y="145.0" width="1" height="1" fill="#ffffff"/><rect x="673" y="145.0" width="2" height="1" fill="#ffffff"/><rect x="669" y="148.0" width="1" height="1" fill="#a4a4a4"/><rect x="673" y="148.0" width="2" height="1" fill="#a0a0a0"/><rect x="669" y="149.5" width="1" height="1" fill="#ffffff"/><rect x="673" y="149.5" width="2" height="1" fill="#ffffff"/><rect x="669" y="152.0" width="1" height="2" fill="#a4a4a4"/><rect x="673" y="152.0" width="2" height="2" fill="#a0a0a0"/><rect x="669" y="154.0" width="1" height="1" fill="#ffffff"/><rect x="673" y="154.0" width="2" height="1" fill="#ffffff"/><rect x="669" y="157.0" width="1" height="1" fill="#a4a4a4"/><rect x="673" y="157.0" width="2" height="1" fill="#a0a0a0"/><rect x="669" y="158.5" width="1" height="1" fill="#ffffff"/><rect x="673" y="158.5" width="2" height="1" fill="#ffffff"/><rect x="732" y="134.0" width="1" height="2" fill="#a4a4a4"/><rect x="736" y="134.0" width="2" height="2" fill="#a0a0a0"/><rect x="732" y="136.0" width="1" height="1" fill="#ffffff"/><rect x="736" y="136.0" width="2" height="1" fill="#ffffff"/><rect x="732" y="139.0" width="1" height="1" fill="#a4a4a4"/><rect x="736" y="139.0" width="2" height="1" fill="#a0a0a0"/><rect x="732" y="140.5" width="1" height="1" fill="#ffffff"/><rect x="736" y="140.5" width="2" height="1" fill="#ffffff"/><rect x="732" y="143.0" width="1" height="2" fill="#a4a4a4"/><rect x="736" y="143.0" width="2" height="2" fill="#a0a0a0"/><rect x="732" y="145.0" width="1" height="1" fill="#ffffff"/><rect x="736" y="145.0" width="2" height="1" fill="#ffffff"/><rect x="732" y="148.0" width="1" height="1" fill="#a4a4a4"/><rect x="736" y="148.0" width="2" height="1" fill="#a0a0a0"/><rect x="732" y="149.5" width="1" height="1" fill="#ffffff"/><rect x="736" y="149.5" width="2" height="1" fill="#ffffff"/><rect x="732" y="152.0" width="1" height="2" fill="#a4a4a4"/><rect x="736" y="152.0" width="2" height="2" fill="#a0a0a0"/><rect x="732" y="154.0" width="1" height="1" fill="#ffffff"/><rect x="736" y="154.0" width="2" height="1" fill="#ffffff"/><rect x="732" y="157.0" width="1" height="1" fill="#a4a4a4"/><rect x="736" y="157.0" width="2" height="1" fill="#a0a0a0"/><rect x="732" y="158.5" width="1" height="1" fill="#ffffff"/><rect x="736" y="158.5" width="2" height="1" fill="#ffffff"/><rect x="868" y="134.0" width="1" height="2" fill="#a4a4a4"/><rect x="872" y="134.0" width="2" height="2" fill="#a0a0a0"/><rect x="868" y="136.0" width="1" height="1" fill="#ffffff"/><rect x="872" y="136.0" width="2" height="1" fill="#ffffff"/><rect x="868" y="139.0" width="1" height="1" fill="#a4a4a4"/><rect x="872" y="139.0" width="2" height="1" fill="#a0a0a0"/><rect x="868" y="140.5" width="1" height="1" fill="#ffffff"/><rect x="872" y="140.5" width="2" height="1" fill="#ffffff"/><rect x="868" y="143.0" width="1" height="2" fill="#a4a4a4"/><rect x="872" y="143.0" width="2" height="2" fill="#a0a0a0"/><rect x="868" y="145.0" width="1" height="1" fill="#ffffff"/><rect x="872" y="145.0" width="2" height="1" fill="#ffffff"/><rect x="868" y="148.0" width="1" height="1" fill="#a4a4a4"/><rect x="872" y="148.0" width="2" height="1" fill="#a0a0a0"/><rect x="868" y="149.5" width="1" height="1" fill="#ffffff"/><rect x="872" y="149.5" width="2" height="1" fill="#ffffff"/><rect x="868" y="152.0" width="1" height="2" fill="#a4a4a4"/><rect x="872" y="152.0" width="2" height="2" fill="#a0a0a0"/><rect x="868" y="154.0" width="1" height="1" fill="#ffffff"/><rect x="872" y="154.0" width="2" height="1" fill="#ffffff"/><rect x="868" y="157.0" width="1" height="1" fill="#a4a4a4"/><rect x="872" y="157.0" width="2" height="1" fill="#a0a0a0"/><rect x="868" y="158.5" width="1" height="1" fill="#ffffff"/><rect x="872" y="158.5" width="2" height="1" fill="#ffffff"/><polygon points="30.0,157.0 35.0,154.0 43.9,137.2 38.6,134.4 29.7,151.2" fill="#d6d4ce" stroke="#c8c6c0" stroke-width="0.8" stroke-linejoin="round"/><polygon points="34.5,157.5 39.5,154.5 48.4,137.7 43.1,134.9 34.2,151.7" fill="#dcdad4" stroke="#c8c6c0" stroke-width="0.8" stroke-linejoin="round"/><path d="M45 153.5 H54 L49.5 158 Z" fill="#8a8a8a"/><path d="M79 134.5 L84 137 L72 156 L68 157.5 L68.5 153 Z" fill="#d4d2cc" stroke="#c4c2bc" stroke-width="0.8"/><path d="M70 154 L80.5 136" stroke="#eeece6" stroke-width="1"/><rect x="103" y="134.5" width="19.5" height="19.5" rx="2.5" fill="#d4d2cc" stroke="#c4c2bc" stroke-width="0.8"/><rect x="106" y="135" width="13" height="7" fill="#eeeeee"/><path d="M107.5 137H117.5M107.5 139H117.5" stroke="#c8c8c8" stroke-width="0.6"/><rect x="106.5" y="146.5" width="10" height="7" fill="#eeeeee"/><path d="M122 140.5 L126 143 L117 157 L114 157.5 L114.5 154 Z" fill="#d4d2cc" stroke="#c4c2bc" stroke-width="0.6"/><path d="M144.5 153 L157.5 139" stroke="#c8c8c8" stroke-width="0.9" stroke-dasharray="1.5 1.5"/><rect x="141.5" y="152" width="3" height="3" fill="none" stroke="#b8b8b8" stroke-width="0.9"/><rect x="157.5" y="136.5" width="3" height="3" fill="none" stroke="#b8b8b8" stroke-width="0.9"/><path d="M172 143 H184 L178 149 Z" fill="#8a8a8a"/><path d="M199 136 C203 134.5 207 138 211 136 C216 134.5 219 138 218 142 C217 146 212 146 207 145.5 C202 146 196 147 196 141.5 C196 138.5 197 136.8 199 136 Z" fill="#dcdcdc" stroke="#c8c8c8" stroke-width="0.8"/><rect x="207.5" y="146.5" width="11.5" height="11.5" rx="1.2" fill="#c8c0b4"/><circle cx="213.2" cy="152.2" r="2.3" fill="none" stroke="#fff" stroke-width="1"/><path d="M213.2 148 V156.5 M209 152.2 H217.5" stroke="#fff" stroke-width="0.9"/><rect x="236" y="136" width="4" height="4" fill="none" stroke="#a8a8a8" stroke-width="0.9"/><path d="M240 138 H253" stroke="#c8c8c8" stroke-width="1.2"/><path d="M238 140 L234.5 156" stroke="#b0b0b0" stroke-width="0.8"/><path d="M242 155 L253 143 M243 143 L253.5 155" stroke="#d6d0c4" stroke-width="2.8"/><path d="M265 142.5 H277 L271 148.5 Z" fill="#8a8a8a"/><rect x="290" y="135.5" width="20" height="5" fill="#d4d2cc"/><rect x="290" y="143" width="20" height="5" fill="#d4d2cc"/><rect x="290" y="150.5" width="20" height="5" fill="#d4d2cc"/><path d="M306.5 135 L310.5 137 L297 157 L295.5 153 Z" fill="#e4e2dc" stroke="#c8c6c0" stroke-width="0.8"/><path d="M334 141 V137 C334 136 333.5 135.5 332.5 135.5 H328 C327 135.5 326.5 136 326.5 137 V148.5 C326.5 149.5 327 150 328 150 H333" fill="none" stroke="#8c8c8c" stroke-width="1.5"/><rect x="333" y="141.5" width="14.5" height="15" rx="2.5" fill="none" stroke="#8c8c8c" stroke-width="1.7"/><rect x="365" y="136" width="13" height="5" fill="#d4d2cc"/><path d="M366 137H383" stroke="#d4d2cc" stroke-width="2"/><path d="M366 142 H382 L381 157 H367 Z" fill="#d4d2cc"/><path d="M370 143.5 V155.5 M374 143.5 V155.5 M378 143.5 V155.5" stroke="#eeece6" stroke-width="0.8"/><path d="M401 139 L418 147 M401 145 L418 140" stroke="#c4c4c4" stroke-width="1.4"/><circle cx="419.5" cy="142" r="3" fill="none" stroke="#bcbcbc" stroke-width="1.3"/><circle cx="419.5" cy="150.5" r="3" fill="none" stroke="#bcbcbc" stroke-width="1.3"/><path d="M447.5 135 H454.5 L457.5 138 V148 H447.5 Z" fill="#fff" stroke="#cfcfcf" stroke-width="0.9" stroke-linejoin="round"/><path d="M454.5 135 V138 H457.5" fill="none" stroke="#cfcfcf" stroke-width="0.7200000000000001"/><path d="M441.5 141 H449.5 L452.5 144 V156.5 H441.5 Z" fill="#fff" stroke="#c4c4c4" stroke-width="0.9" stroke-linejoin="round"/><path d="M449.5 141 V144 H452.5" fill="none" stroke="#c4c4c4" stroke-width="0.7200000000000001"/><path d="M443.5 147H450M443.5 149.5H450M443.5 152H450" stroke="#c8c8c8" stroke-width="0.7"/><rect x="479" y="135.5" width="15.5" height="21" rx="1" fill="#efefef" stroke="#c8c8c8" stroke-width="0.9"/><rect x="482" y="134.5" width="9" height="3" fill="#d0d0d0"/><path d="M482 139 H489.5 L492 141.5 V153.5 H482 Z" fill="#fff" stroke="#c4c4c4" stroke-width="0.8" stroke-linejoin="round"/><path d="M489.5 139 V141.5 H492" fill="none" stroke="#c4c4c4" stroke-width="0.6400000000000001"/><path d="M483.5 144H490M483.5 146.5H490M483.5 149H490" stroke="#c8c8c8" stroke-width="0.7"/><path d="M516 144.5 L522.5 137 V141.5 H527 C531 141.5 534 144 534 148 C534 152 531 155 527 155 H525 V151 H527 C529 151 530 149.7 530 148 C530 146.5 529 145.5 527 145.5 H522.5 V150 Z" fill="#d0ccc4" stroke="#c8c4bc" stroke-width="0.5"/><path d="M571 144.5 L564.5 137 V141.5 H560 C556 141.5 553 144 553 148 C553 152 556 155 560 155 H562 V151 H560 C558 151 557 149.7 557 148 C557 146.5 558 145.5 560 145.5 H564.5 V150 Z" fill="#d4d4d4" stroke="#cccccc" stroke-width="0.5"/><rect x="588.5" y="134.5" width="5" height="5" fill="none" stroke="#cfcfcf" stroke-width="0.8"/><rect x="593.5" y="134.5" width="5" height="5" fill="none" stroke="#cfcfcf" stroke-width="0.8"/><path d="M590 143.5 L599 156 L609 135 L609 140 L601 144 Z" fill="#e2e4e6" stroke="#cfd3d6" stroke-width="0.8"/><circle cx="590" cy="143.5" r="1" fill="#c8b8a0"/><circle cx="609" cy="135" r="1.2" fill="#b8c8d0"/><circle cx="609" cy="140" r="1.2" fill="#b8c8d0"/><circle cx="599" cy="156" r="1.2" fill="#b8c8d0"/><rect x="601" y="147" width="11" height="11" rx="1.3" fill="#c8c0b4"/><circle cx="606.5" cy="152.5" r="2.2" fill="none" stroke="#fff" stroke-width="1"/><path d="M606.5 148.5V156.5M602.5 152.5H610.5" stroke="#fff" stroke-width="0.9"/><rect x="625.5" y="134.5" width="5" height="5" fill="none" stroke="#cfcfcf" stroke-width="0.8"/><rect x="630.5" y="134.5" width="5" height="5" fill="none" stroke="#cfcfcf" stroke-width="0.8"/><path d="M627 143.5 L636 156 L646 135 L646 140 L638 144 Z" fill="#e2e4e6" stroke="#cfd3d6" stroke-width="0.8"/><circle cx="627" cy="143.5" r="1" fill="#c8b8a0"/><circle cx="646" cy="135" r="1.2" fill="#b8c8d0"/><circle cx="646" cy="140" r="1.2" fill="#b8c8d0"/><circle cx="636" cy="156" r="1.2" fill="#b8c8d0"/><path d="M638 157 L647 143 M639.5 157.5 L648.5 144" stroke="#d0ccc4" stroke-width="1.2"/><circle cx="700" cy="146" r="11.3" fill="#dce8f4" stroke="#86acd8" stroke-width="1.2"/><path d="M692 156.5 C692 152 694 150.5 697.5 149.5 C695.5 148 695 145.5 695 143 C695 139 697 136.5 700 136.5 C703 136.5 705 139 705 143 C705 145.5 704.5 148 702.5 149.5 C706 150.5 708 152 708 156.5 C706 158 703 157.5 700 157.5 C697 157.5 694 158 692 156.5 Z" fill="#2f86d8"/><path d="M751 135 L762 134 L773 136 L772 146 L773 157 L762 156 L751 157.5 L752 146 Z" fill="#b8e0a0" stroke="#a8d890" stroke-width="0.6"/><path d="M755 140 L762 142 L768 138 M754 150 L760 148 L766 152" stroke="#9ac88a" stroke-width="0.8" fill="none"/><path d="M760 142.5 L772.5 149 L768 150.5 L772.5 155 L770.5 157 L766 152.5 L763.5 156.5 Z" fill="#3d84e6" stroke="#2a6ed0" stroke-width="0.5"/><defs><linearGradient id="gb798" x1="0" x2="1"><stop offset="0" stop-color="#3a3a3a"/><stop offset="0.2" stop-color="#f0f0f0"/><stop offset="0.35" stop-color="#555"/><stop offset="0.5" stop-color="#5b9be0"/><stop offset="0.65" stop-color="#555"/><stop offset="0.8" stop-color="#f0f0f0"/><stop offset="1" stop-color="#3a3a3a"/></linearGradient></defs><circle cx="798.5" cy="144.5" r="10.7" fill="url(#gb798)" stroke="#3a78c8" stroke-width="1.2"/><ellipse cx="798.5" cy="144.5" rx="4.8149999999999995" ry="10.7" fill="none" stroke="#3a78c8" stroke-width="1"/><path d="M787.8 144.5 H809.2 M788.87 139.685 H808.13 M788.87 149.315 H808.13" stroke="#3a78c8" stroke-width="0.9"/><rect x="801.5" y="149" width="9" height="9" rx="1" fill="#4a9a50"/><path d="M803 150.5 H809" stroke="#fff" stroke-width="1"/><path d="M802.5 153 H814 L808.2 159 Z" fill="#1a1a1a"/><rect x="819.5" y="129.5" width="35" height="33.5" rx="3.5" fill="#dadada" stroke="#a9a9a9" stroke-width="1"/><defs><linearGradient id="gb836" x1="0" x2="1"><stop offset="0" stop-color="#3a3a3a"/><stop offset="0.2" stop-color="#f0f0f0"/><stop offset="0.35" stop-color="#555"/><stop offset="0.5" stop-color="#5b9be0"/><stop offset="0.65" stop-color="#555"/><stop offset="0.8" stop-color="#f0f0f0"/><stop offset="1" stop-color="#3a3a3a"/></linearGradient></defs><circle cx="836.5" cy="144.5" r="10.7" fill="url(#gb836)" stroke="#3a78c8" stroke-width="1.2"/><ellipse cx="836.5" cy="144.5" rx="4.8149999999999995" ry="10.7" fill="none" stroke="#3a78c8" stroke-width="1"/><path d="M825.8 144.5 H847.2 M826.87 139.685 H846.13 M826.87 149.315 H846.13" stroke="#3a78c8" stroke-width="0.9"/><rect x="840" y="149" width="9.5" height="9.5" rx="1" fill="#4a9a50"/><circle cx="844" cy="153" r="2.3" fill="none" stroke="#fff" stroke-width="1.1"/><path d="M845.5 154.5 L848 157" stroke="#fff" stroke-width="1.2"/><path d="M886 134 H910 V153 L898 158 L886 153 Z" fill="#33b3db"/><path d="M893.5 154 V141 M889.5 144.5 L893.5 139.5 L897.5 144.5 M902.5 138 V151 M898.5 147.5 L902.5 152.5 L906.5 147.5" fill="none" stroke="#fff" stroke-width="2.3"/><rect x="536" y="176.5" width="16" height="15" rx="3" fill="#f6f6f6" stroke="#6a6a6a" stroke-width="1.3"/><path d="M540.5 182 V187.5 H546 V182 Z M543 182 V179.5 H548.5 V185 H546" fill="none" stroke="#555" stroke-width="1.2"/><rect x="556.5" y="176.5" width="16" height="15" rx="3" fill="#f6f6f6" stroke="#6a6a6a" stroke-width="1.3"/><path d="M560.5 180 L568.5 188 M568.5 180 L560.5 188" stroke="#555" stroke-width="2.6"/><path d="M15 221 L21 214 L28 217 L22 224 Z" fill="#f8e070"/><path d="M14 224 L19 218.5 L25 221 L20 227 Z" fill="#7aa8e0"/><path d="M13.5 226 L18 221 L24 224 L21 230 Z" fill="#e84040"/><path d="M19 223 L26 216 L31 221 L24 229 Z" fill="#d8b070" stroke="#b88a40" stroke-width="0.7"/><path d="M28 219 L35.5 213" stroke="#d89a40" stroke-width="2.6" stroke-linecap="round"/><path d="M58.5 231.5 H52.5 V219" fill="none" stroke="#8a8a8a" stroke-width="1.2"/><rect x="56" y="215.5" width="9" height="13" fill="none" stroke="#777" stroke-width="1.3"/><path d="M61 212.5 H72 V226" fill="none" stroke="#888" stroke-width="1.3"/><path d="M63 224 V212 C63 210 66 210 66 212 V224" fill="none" stroke="#3f6fa8" stroke-width="1.1"/><rect x="65" y="224" width="9" height="9" rx="1.5" fill="#4e9a54"/><path d="M69.5 225.5 V231.5 M66.5 228.5 H72.5" stroke="#fff" stroke-width="1.8"/><path d="M89.5 221 C93 215.5 98 214 102 214.5 C106 215 109 218 111.5 222 C108 226.5 103 228 99 228 C95 228 91.5 225.5 89.5 221 Z" fill="#fff" stroke="#555" stroke-width="0.9"/><circle cx="100" cy="220.5" r="5.5" fill="#5b8ccb" stroke="#3f6aa5" stroke-width="0.8"/><circle cx="100.5" cy="220" r="2.3" fill="#111"/><circle cx="99.8" cy="219.2" r="0.8" fill="#fff"/><path d="M89 215 C95 211.5 103 211.5 109 215" fill="none" stroke="#666" stroke-width="0.8"/><path d="M106 229 H115 L110.5 233.7 Z" fill="#444"/><path d="M128.5 210.5 H148 V214 L141 222 V232 L135.5 228.5 V222 L128.5 214 Z" fill="#6a98d0" stroke="#3a5a80" stroke-width="1"/><rect x="130" y="212" width="16.5" height="2.5" fill="#f2e040"/><path d="M144.5 229 H153 L148.7 233.5 Z" fill="#444"/><path d="M175 213.5 C172 212 168 212.5 167.5 215.5 C167 217.5 168.5 219 170.5 219.5 C167.5 220 166 222 166.5 224.5 C167 227.5 171 228.5 175.5 226.5" fill="none" stroke="#cccccc" stroke-width="1.7"/><rect x="176" y="221" width="11" height="11" rx="1.3" fill="#dedede"/><path d="M178 223 H185 L182.5 227 V231 H180.5 V227 Z" fill="#f4f4f4"/><path d="M196 217.7 H208 L202 224 Z" fill="#a8a8a8"/><path d="M221 212 H241" stroke="#999" stroke-width="1.3"/><path d="M222.5 212 V229" stroke="#aaa" stroke-width="1.2"/><path d="M222.5 219 H226 M222.5 228 H226" stroke="#aaa" stroke-width="1"/><rect x="226" y="216.5" width="4.5" height="4.5" fill="#f59a10" stroke="#e08000" stroke-width="0.5"/><rect x="226" y="225.5" width="4.5" height="4.5" fill="#f59a10" stroke="#e08000" stroke-width="0.5"/><path d="M234 211 H238.5 V222.5 H242.5 L236.2 231 L230 222.5 H234 Z" fill="#6a98d0" stroke="#3a5a80" stroke-width="1"/><path d="M257.5 212 H277.5" stroke="#999" stroke-width="1.3"/><path d="M259.0 212 V229" stroke="#aaa" stroke-width="1.2"/><path d="M259.0 219 H262.5 M259.0 228 H262.5" stroke="#aaa" stroke-width="1"/><rect x="262.5" y="216.5" width="4.5" height="4.5" fill="#f59a10" stroke="#e08000" stroke-width="0.5"/><rect x="262.5" y="225.5" width="4.5" height="4.5" fill="#f59a10" stroke="#e08000" stroke-width="0.5"/><path d="M271.0 230 H275.5 V218.5 H279.5 L273.2 210 L267.0 218.5 H271.0 Z" fill="#6a98d0" stroke="#3a5a80" stroke-width="1"/><rect x="296.5" y="211.5" width="16.5" height="16.5" fill="none" stroke="#777" stroke-width="1.4"/><rect x="307.5" y="224" width="9" height="7.5" rx="1.8" fill="#e83a48"/><path d="M309.5 227.8 H314.5" stroke="#fff" stroke-width="1.6"/><path d="M15 254.5 L20 259.5 L15 264.5 Z" fill="#1a2a3a"/><rect x="37.5" y="249.5" width="20" height="20" fill="#fff" stroke="#a09a90" stroke-width="1"/><path d="M41.5 259.5 L46 265.0 L53.5 253.0" fill="none" stroke="#000" stroke-width="2"/><rect x="70.0" y="251.0" width="6.7" height="6.5" fill="#2c3a4c"/><rect x="76.6" y="251.0" width="6.7" height="6.5" fill="#a8c4e2"/><rect x="83.2" y="251.0" width="6.7" height="6.5" fill="#2c3a4c"/><rect x="70.0" y="257.4" width="6.7" height="6.5" fill="#a8c4e2"/><rect x="76.6" y="257.4" width="6.7" height="6.5" fill="#2c3a4c"/><rect x="83.2" y="257.4" width="6.7" height="6.5" fill="#a8c4e2"/><rect x="70.0" y="263.8" width="6.7" height="6.5" fill="#2c3a4c"/><rect x="76.6" y="263.8" width="6.7" height="6.5" fill="#a8c4e2"/><path d="M15 281.5 L20 286.5 L15 291.5 Z" fill="#666"/><rect x="37.5" y="276.5" width="20" height="20" fill="#fff" stroke="#a8a8a8" stroke-width="1"/><path d="M41.5 286.5 L46 292.0 L53.5 280.0" fill="none" stroke="#000" stroke-width="2"/><rect x="70.0" y="278.0" width="6.7" height="6.5" fill="#2c3a4c"/><rect x="76.6" y="278.0" width="6.7" height="6.5" fill="#a8c4e2"/><rect x="83.2" y="278.0" width="6.7" height="6.5" fill="#2c3a4c"/><rect x="70.0" y="284.4" width="6.7" height="6.5" fill="#a8c4e2"/><rect x="76.6" y="284.4" width="6.7" height="6.5" fill="#2c3a4c"/><rect x="83.2" y="284.4" width="6.7" height="6.5" fill="#a8c4e2"/><rect x="70.0" y="290.8" width="6.7" height="6.5" fill="#2c3a4c"/><rect x="76.6" y="290.8" width="6.7" height="6.5" fill="#a8c4e2"/><path d="M12 310.5 H22 L17 316.0 Z" fill="#555"/><rect x="37.5" y="303.5" width="20" height="20" fill="#fff" stroke="#a8a8a8" stroke-width="1"/><path d="M41.5 313.5 L46 319.0 L53.5 307.0" fill="none" stroke="#000" stroke-width="2"/><rect x="70.0" y="305.0" width="6.7" height="6.5" fill="#2c3a4c"/><rect x="76.6" y="305.0" width="6.7" height="6.5" fill="#a8c4e2"/><rect x="83.2" y="305.0" width="6.7" height="6.5" fill="#2c3a4c"/><rect x="70.0" y="311.4" width="6.7" height="6.5" fill="#a8c4e2"/><rect x="76.6" y="311.4" width="6.7" height="6.5" fill="#2c3a4c"/><rect x="83.2" y="311.4" width="6.7" height="6.5" fill="#a8c4e2"/><rect x="70.0" y="317.8" width="6.7" height="6.5" fill="#2c3a4c"/><rect x="76.6" y="317.8" width="6.7" height="6.5" fill="#a8c4e2"/><circle cx="28" cy="813.5" r="5.8" fill="none" stroke="#888" stroke-width="1.8"/><path d="M32.2 817.8 L38 823.5" stroke="#888" stroke-width="2.2"/><ellipse cx="648.5" cy="814.5" rx="6.3" ry="9" transform="rotate(-38 648.5 814.5)" fill="#f4f4f4" stroke="#1a1a1a" stroke-width="2"/><path d="M645 809 L649 814" stroke="#1a1a1a" stroke-width="2.2" stroke-linecap="round"/><circle cx="652.5" cy="819.5" r="2.6" fill="#fff" stroke="#1a1a1a" stroke-width="1.4"/><circle cx="655" cy="823" r="2.5" fill="#d0c0c0" opacity="0.7"/><path d="M657 806.5 h1.6 M660 804.5 h1.5 M659 810 h1.5" stroke="#333" stroke-width="1.5"/><path d="M791.5 811.5 H803.5 L797.5 817.5 Z" fill="#555"/><path d="M835.5 815 V811 C835.5 806.5 846.5 806.5 846.5 811 V815" fill="none" stroke="#666" stroke-width="2.6"/><rect x="832" y="814.5" width="18" height="12.5" rx="2" fill="#666"/><path d="M983 810 L988 804.5 L993 810 Z M983 819 L988 824.5 L993 819 Z" fill="#4a4a4a"/><path d="M1142 810 L1147 804.5 L1152 810 Z M1142 819 L1147 824.5 L1152 819 Z" fill="#4a4a4a"/><rect x="1168.5" y="804.5" width="20" height="20" fill="#fff" stroke="#a8a8a8" stroke-width="1"/><path d="M1172.5 814.5 L1177 820 L1184.5 808" fill="none" stroke="#000" stroke-width="2"/><ellipse cx="1311.5" cy="814.5" rx="10.5" ry="9.5" fill="none" stroke="#777" stroke-width="1.4"/><ellipse cx="1311.5" cy="814.5" rx="4.5" ry="9.5" fill="none" stroke="#777" stroke-width="1.2"/><path d="M1301 814.5 H1322 M1303 809.5 H1320 M1303 819.5 H1320 M1311.5 805 V824" stroke="#777" stroke-width="1.1"/><path d="M1301 811 C1305 805 1318 805 1322 811" fill="#888" opacity="0.5"/><path d="M1455 805 C1462 805 1467 809 1467 814.5 C1467 818.5 1464.5 821.5 1461 823 L1465 827.5 L1456.5 824 C1449 824.5 1443 820 1443 814.5 C1443 809 1448 805 1455 805 Z" fill="#666"/><circle cx="1449.5" cy="814.5" r="1.7" fill="#fff"/><circle cx="1455" cy="814.5" r="1.7" fill="#fff"/><circle cx="1460.5" cy="814.5" r="1.7" fill="#fff"/><rect x="1507" y="820" width="2" height="2" fill="#a8a8a8"/><rect x="1503" y="824" width="2" height="2" fill="#a8a8a8"/><rect x="1507" y="824" width="2" height="2" fill="#a8a8a8"/><rect x="1499" y="828" width="2" height="2" fill="#a8a8a8"/><rect x="1503" y="828" width="2" height="2" fill="#a8a8a8"/><rect x="1507" y="828" width="2" height="2" fill="#a8a8a8"/><rect x="1495" y="832" width="2" height="2" fill="#a8a8a8"/><rect x="1499" y="832" width="2" height="2" fill="#a8a8a8"/><rect x="1503" y="832" width="2" height="2" fill="#a8a8a8"/><rect x="1507" y="832" width="2" height="2" fill="#a8a8a8"/><path d="M15 738.5 L9 744.5 L15 750.5 Z M561 738.5 L567 744.5 L561 750.5 Z" fill="#4a4a4a"/><rect x="579" y="472" width="2" height="2" fill="#b0b0b0"/><rect x="579" y="476" width="2" height="2" fill="#b0b0b0"/><rect x="579" y="480" width="2" height="2" fill="#b0b0b0"/><rect x="579" y="484" width="2" height="2" fill="#b0b0b0"/><rect x="579" y="488" width="2" height="2" fill="#b0b0b0"/></svg>
</body></html>
